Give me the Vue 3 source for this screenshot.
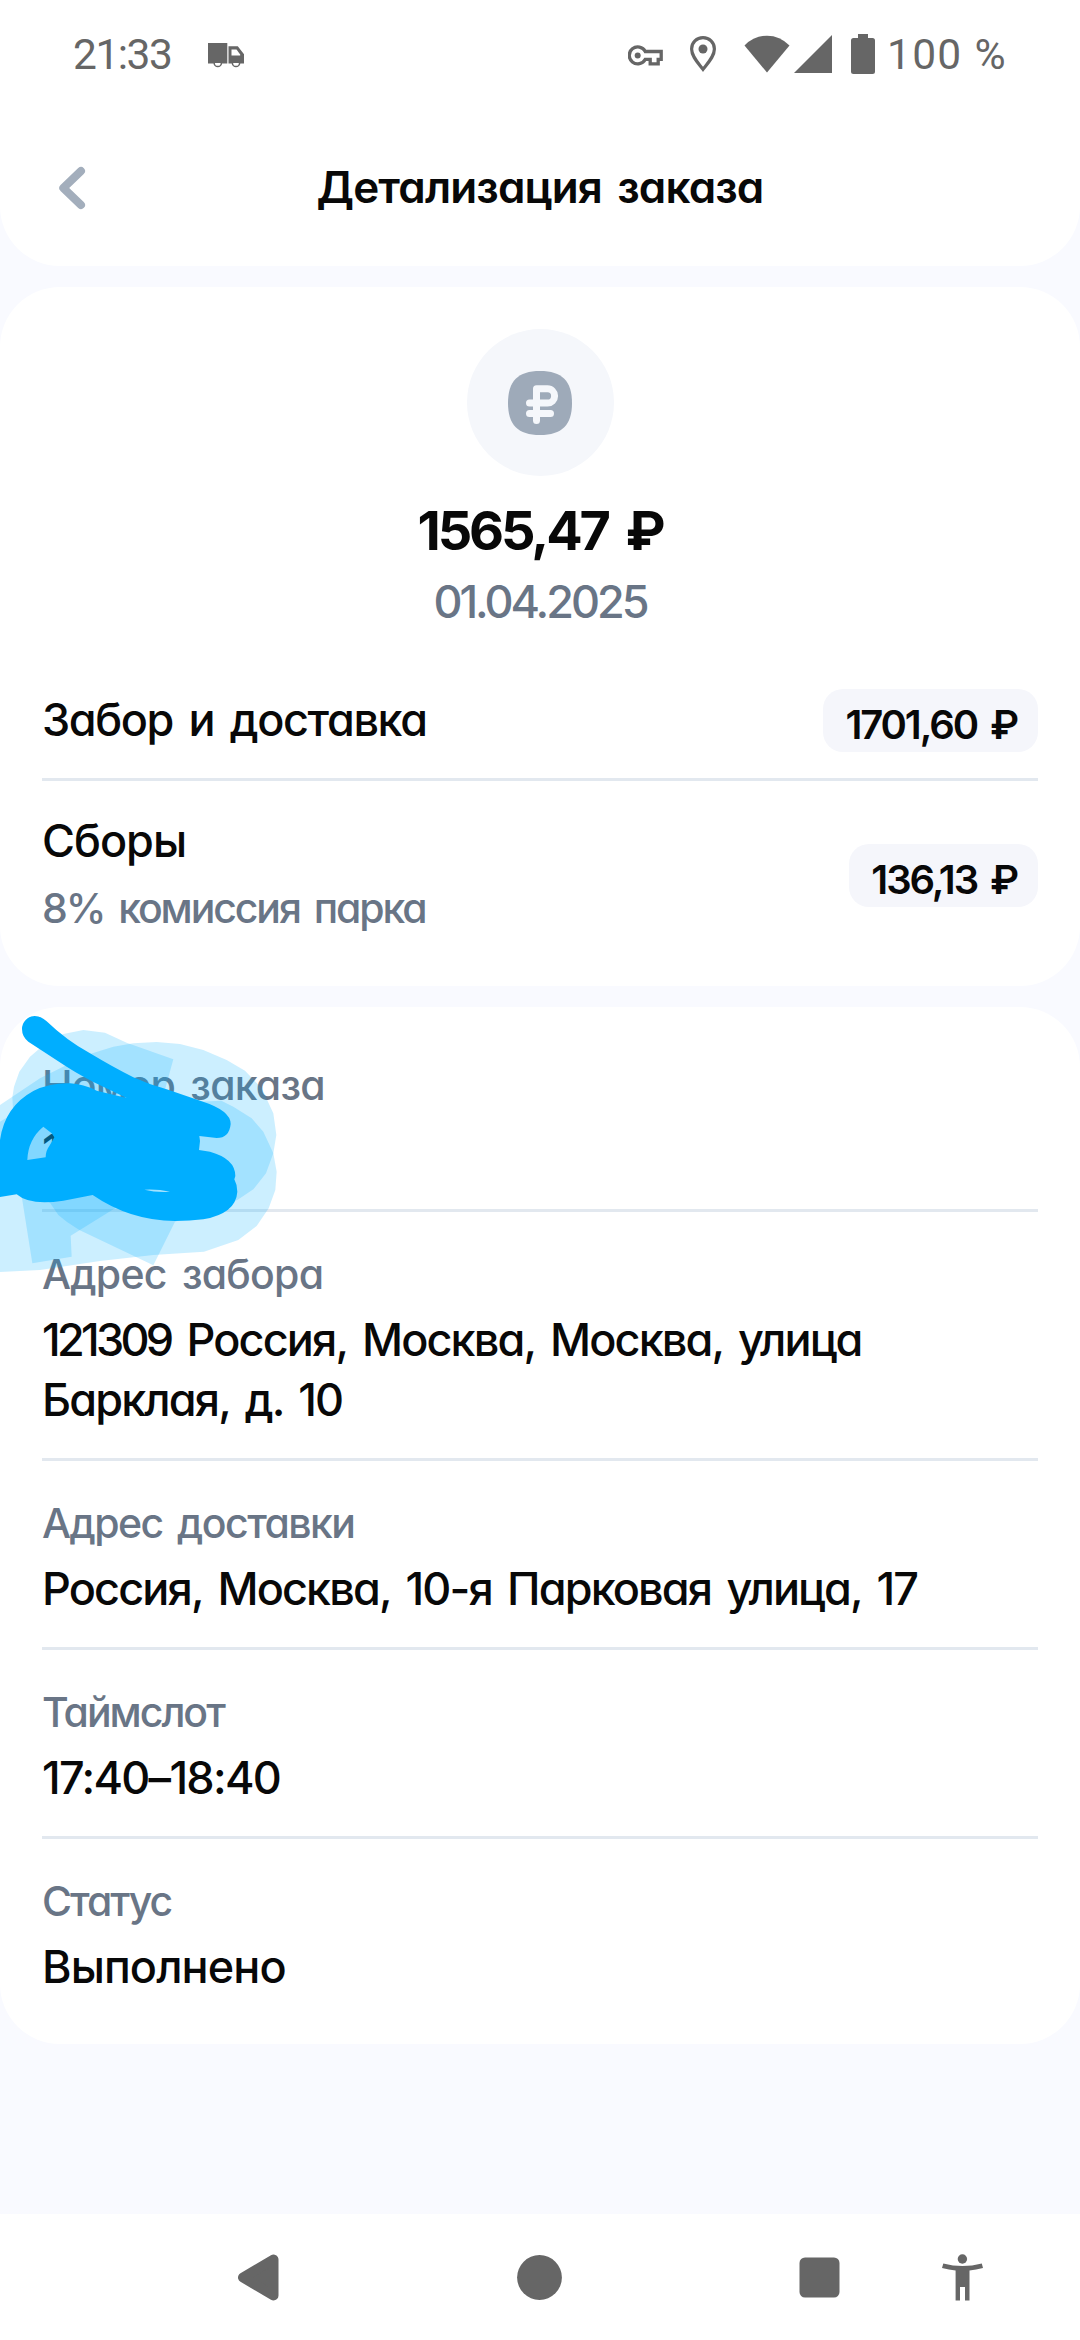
<script setup>
const charges = [
  { title: 'Забор и доставка', note: '', sum: '1701,60 ₽', cls: 'delivery' },
  { title: 'Сборы', note: '8% комиссия парка', sum: '136,13 ₽', cls: 'fees' },
]
const details = [
  { label: 'Номер заказа', parts: ['1'], cls: 'd-number' },
  { label: 'Адрес забора', parts: ['121309', 'Россия, Москва, Москва, улица', 'Барклая, д. 10'], cls: 'd-pickup' },
  { label: 'Адрес доставки', parts: ['Россия, Москва, 10-я Парковая улица, 17'], cls: 'd-drop' },
  { label: 'Таймслот', parts: ['17:40–18:40'], cls: 'd-slot' },
  { label: 'Статус', parts: ['Выполнено'], cls: 'd-status' },
]
</script>

<template>
  <div class="screen">
    <header class="top">
      <div class="statusbar">
        <span class="clock">21:33</span>
        <svg class="truck" viewBox="0 0 36 26" width="36" height="26">
          <path d="M0 1h19.300v20.500H0zM20.500 4.200h9.300l6.200 8v9.300H20.500z" fill="#666" />
          <path d="M23.500 7.400h5l3.700 5v1h-8.700z" fill="#fff" />
          <path d="M6.200 21a3.600 3.600 0 0 0 7.200 0M24.400 21a3.600 3.600 0 0 0 7.200 0" fill="#fff" stroke="#666" stroke-width="1.500" />
        </svg>
        <span class="grow"></span>
        <svg class="key" viewBox="0 0 35 21" width="35" height="21">
          <path d="M17.300 6.500A8.500 8.500 0 1 0 17.300 14.300H22.200V18.800H30.200V14.300H33.200V6.500Z" fill="none" stroke="#666" stroke-width="3.300" />
          <circle cx="9.700" cy="10.400" r="3" fill="#666" />
        </svg>
        <svg class="pin" viewBox="0 0 26 36" width="26" height="36">
          <path d="M13 1.700C6.600 1.700 1.600 6.700 1.600 13c0 7.400 6.600 13.900 11.400 20.300C17.800 26.900 24.400 20.400 24.400 13 24.400 6.700 19.400 1.700 13 1.700Z" fill="none" stroke="#666" stroke-width="3.200" />
          <circle cx="13" cy="13" r="4.500" fill="#666" />
        </svg>
        <svg class="wifi" viewBox="0 0 46 38" width="46" height="38">
          <path d="M0.500 10.500Q10 0.700 23 0.700T45.500 10.500L23 37.500Z" fill="#666" />
        </svg>
        <svg class="cell" viewBox="0 0 38 38" width="38" height="38"><path d="M38 0V38H0Z" fill="#666" /></svg>
        <svg class="battery" viewBox="0 0 24 40" width="24" height="40">
          <path d="M7 0H17V4H21.500Q24 4 24 6.500V37.500Q24 40 21.500 40H2.500Q0 40 0 37.500V6.500Q0 4 2.500 4H7Z" fill="#666" />
        </svg>
        <span class="percent">100 %</span>
      </div>
      <div class="titlebar">
        <svg class="back" viewBox="0 0 28 44" width="28" height="44">
          <path d="M23 5L5.300 22L23 39" fill="none" stroke="#a3aebc" stroke-width="8" stroke-linecap="round" stroke-linejoin="round" />
        </svg>
        <h1>Детализация заказа</h1>
      </div>
    </header>

    <section class="card summary">
      <div class="badge">
        <svg viewBox="0 0 64 64" width="64" height="64">
          <path d="M32 0C54 0 64 10 64 32S54 64 32 64 0 54 0 32 10 0 32 0Z" fill="#9eaab9" />
          <path d="M28.500 49.500V17.800H39.500A7.100 7.100 0 0 1 39.500 32H21.500M21.500 42.500H42.500" fill="none" stroke="#f5f7fb" stroke-width="7" stroke-linecap="round" stroke-linejoin="round" />
        </svg>
      </div>
      <div class="amount">1565,47 ₽</div>
      <div class="date">01.04.2025</div>
      <div v-for="c in charges" :key="c.title" class="charge" :class="c.cls">
        <div>
          <div class="value">{{ c.title }}</div>
          <div v-if="c.note" class="label">{{ c.note }}</div>
        </div>
        <span class="pill">{{ c.sum }}</span>
      </div>
    </section>

    <section class="card details">
      <div v-for="d in details" :key="d.label" class="detail" :class="d.cls">
        <div class="label">{{ d.label }}</div>
        <div class="value">
          <span v-for="part in d.parts" :key="part">{{ part }}</span>
        </div>
      </div>
      <svg class="scribble" viewBox="0 0 1080 1020" width="360" height="340">
        <g fill="#00aeff" fill-opacity="0.2">
          <path d="M520 238L380 188L315 158L250 150L190 162L125 200L90 230L58 275L42 320L37 352L40 405L66 655L97 850L215 830L212 767L345 685L470 420Z" />
          <path d="M0 375L120 295L200 255L270 222L340 200L400 190L470 186L540 192L610 210L680 240L735 272L785 325L820 400L829 465L820 520L798 580L760 628L712 660L600 700L525 725L460 856L238 750L200 725L175 705L150 668L0 600Z" />
          <path d="M0 425L25 410L200 380L500 370L664 362L700 380L755 415L790 455L820 520L830 575L826 630L806 685L770 738L715 780L612 815L460 825L300 843L120 870L0 876Z" />
        </g>
        <path fill="#00aeff" fill-rule="evenodd" d="M66 147A39 39 0 0 1 104 108Q122 108 140 124Q200 182 270 220Q340 262 400 292Q450 315 500 328L605 364Q692 392 692 432Q688 474 650 474L598 468L600 483L597 510L630 515Q706 536 706 588L703 598Q712 615 712 635Q708 700 610 718Q570 723 525 723Q390 722 278 645L190 662Q90 678 50 643L0 651V480Q14 380 100 333Q150 308 210 310Q250 312 290 332L380 354L313 322Q250 292 200 260L85 185Q66 170 66 147ZM130 440Q84 478 82 540L137 532Q137 512 148 498L163 472L155 460ZM433 629Q470 638 510 635Q475 627 433 629Z" />
      </svg>
    </section>

    <nav class="nav">
      <svg viewBox="0 0 1080 126" width="1080" height="126" fill="#666">
        <path d="M243 63.500L273.500 45.500V81.500Z" stroke="#666" stroke-width="10" stroke-linejoin="round" />
        <circle cx="539.500" cy="63.500" r="22.400" />
        <rect x="799.500" y="43.500" width="40" height="40" rx="5.500" />
        <circle cx="962.400" cy="45" r="4.700" />
        <path d="M943.300 49.500Q953 52 962.500 52T981.800 49.500L983 54Q976 55.800 969.500 56.500V86.500H965V73H960V86.500H955.600V56.500Q949 55.800 942 54Z" />
      </svg>
    </nav>
  </div>
</template>

<style>
body {
  margin: 0;
}
</style>

<style scoped>
.screen {
  width: 1080px;
  height: 2340px;
  display: flex;
  flex-direction: column;
  background: #f9faff;
  color: #080808;
  font-family: Inter, 'Noto Sans', sans-serif;
  font-feature-settings: 'cv11';
  word-spacing: 5px;
  overflow: hidden;
}
.top {
  height: 266px;
  background: #fff;
  border-radius: 0 0 60px 60px;
}
.statusbar {
  height: 108px;
  display: flex;
  align-items: center;
  padding: 0 76px 0 73px;
  color: #666;
  font-family: Roboto, sans-serif;
  font-size: 42.5px;
  word-spacing: 0;
}
.clock {
  width: 135px;
  letter-spacing: -1.5px;
  white-space: nowrap;
}
.truck {
  margin-top: 2px;
}
.grow {
  flex: 1;
}
.key {
  margin-top: 2px;
}
.pin {
  margin-left: 27px;
}
.wifi {
  margin-left: 28px;
}
.cell {
  margin-left: 4px;
}
.battery {
  margin-left: 19px;
}
.percent {
  width: 117px;
  margin-left: 12px;
  letter-spacing: 1.3px;
  white-space: nowrap;
}
.titlebar {
  height: 158px;
  display: grid;
  grid-template-columns: 100px 1fr 100px;
  align-items: center;
}
.back {
  margin: 1px 0 0 58px;
}
h1 {
  margin: 0;
  font-size: 44px;
  line-height: 60px;
  font-weight: 600;
  letter-spacing: -0.85px;
  text-align: center;
  white-space: nowrap;
}
.card {
  margin-top: 21px;
  background: #fff;
  border-radius: 60px;
}
.summary {
  height: 699px;
  display: flex;
  flex-direction: column;
}
.badge {
  width: 147px;
  height: 147px;
  margin: 42px auto 0;
  flex: none;
  border-radius: 50%;
  background: #f5f7fb;
  display: grid;
  place-items: center;
}
.amount {
  margin-top: 20px;
  text-align: center;
  font-size: 54px;
  line-height: 70px;
  font-weight: 700;
  letter-spacing: -3.1px;
  word-spacing: 8px;
}
.date {
  margin-top: 6px;
  text-align: center;
  font-size: 45px;
  line-height: 60px;
  font-weight: 450;
  letter-spacing: -3px;
  color: #697586;
}
.charge {
  margin: 0 42px;
  display: flex;
  justify-content: space-between;
}
.delivery {
  height: 88px;
  margin-top: 58px;
  border-bottom: 3px solid #e2e8ef;
}
.delivery .pill {
  margin-top: -1px;
}
.fees {
  padding-top: 30px;
}
.fees .label {
  margin-top: 10px;
  letter-spacing: -2.1px;
}
.pill {
  height: 63px;
  box-sizing: border-box;
  padding: 6px 21px 0 22px;
  border-radius: 20px;
  background: #f5f6fb;
  font-size: 40px;
  line-height: 60px;
  font-weight: 600;
  letter-spacing: -2.1px;
  white-space: nowrap;
}
.fees .pill {
  margin-top: 33px;
}
.label {
  font-size: 41px;
  line-height: 54px;
  font-weight: 450;
  color: #697586;
}
.value {
  font-size: 45px;
  line-height: 60px;
  font-weight: 450;
}
.delivery .value {
  letter-spacing: -1.4px;
}
.fees .value {
  letter-spacing: -1px;
}
.details {
  position: relative;
  height: 1021px;
  padding: 16px 42px 0;
}
.detail {
  padding: 35px 0 28px;
  border-bottom: 3px solid #e2e8ef;
}
.detail:last-of-type {
  border-bottom: 0;
}
.detail .value {
  display: flex;
  flex-wrap: wrap;
  column-gap: 16px;
  margin-top: 9px;
}
.d-number .label,
.d-pickup .label {
  letter-spacing: -0.75px;
}
.d-drop .label {
  letter-spacing: -1.55px;
}
.d-slot .label,
.d-status .label {
  letter-spacing: -2px;
}
.d-pickup .value,
.d-drop .value {
  letter-spacing: -1.85px;
}
.d-pickup .value span:first-child {
  letter-spacing: -3.7px;
}
.d-slot .value {
  letter-spacing: -1.7px;
}
.d-status .value {
  letter-spacing: -0.9px;
}
.scribble {
  position: absolute;
  left: 0;
  top: -27px;
}
.nav {
  height: 126px;
  margin-top: auto;
  background: #fff;
}
.nav svg {
  display: block;
}
</style>
